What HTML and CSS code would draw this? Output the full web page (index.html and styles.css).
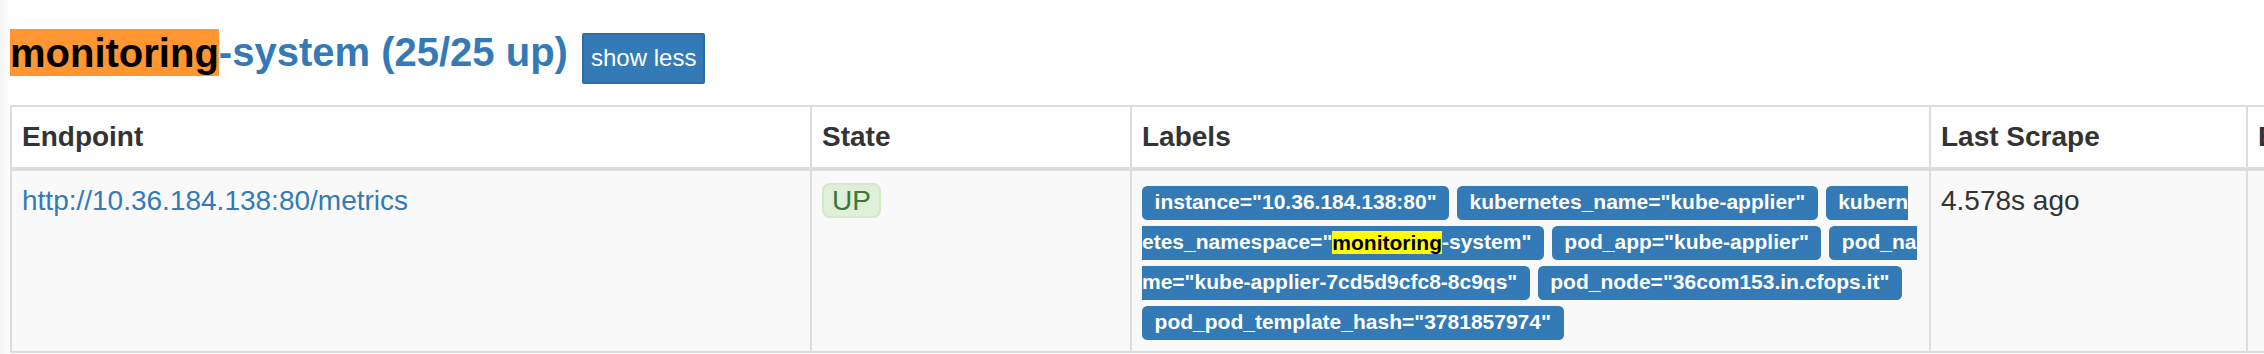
FILE: index.html
```html
<!DOCTYPE html>
<html lang="en">
<head>
    <meta charset="UTF-8">
    <meta name="viewport" content="width=device-width, initial-scale=1.0">
    <title>Targets</title>
    <link rel="stylesheet" href="styles.css">
</head>
<body>

    <div class="container">
        <h2 class="job-title">
            <a href="#job-monitoring-system"><mark class="find-active">monitoring</mark>-system (25/25 up)</a>
            <button class="toggle-btn">show less</button>
        </h2>

        <table class="targets">
            <colgroup>
                <col class="col-endpoint">
                <col class="col-state">
                <col class="col-labels">
                <col class="col-scrape">
                <col class="col-error">
            </colgroup>
            <thead>
                <tr>
                    <th>Endpoint</th>
                    <th>State</th>
                    <th>Labels</th>
                    <th>Last Scrape</th>
                    <th>Error</th>
                </tr>
            </thead>
            <tbody>
                <tr>
                    <td><a href="http://10.36.184.138:80/metrics">http://10.36.184.138:80/metrics</a></td>
                    <td><span class="state state-up">UP</span></td>
                    <td class="labels">
                        <span class="label">instance="10.36.184.138:80"</span>
                        <span class="label">kubernetes_name="kube-applier"</span>
                        <span class="label">kubernetes_namespace="<mark class="find">monitoring</mark>-system"</span>
                        <span class="label">pod_app="kube-applier"</span>
                        <span class="label">pod_name="kube-applier-7cd5d9cfc8-8c9qs"</span>
                        <span class="label">pod_node="36com153.in.cfops.it"</span>
                        <span class="label">pod_pod_template_hash="3781857974"</span>
                    </td>
                    <td>4.578s ago</td>
                    <td></td>
                </tr>
            </tbody>
        </table>
    </div>

</body>
</html>
```

FILE: styles.css
```css
html, body {
    margin: 0;
    padding: 0;
    overflow: hidden;
}
body {
    font-family: "Liberation Sans", Arial, sans-serif;
    font-size: 28px;
    line-height: 40px;
    color: #333;
    background: linear-gradient(to right, #f3f3f3, #fff 10px);
}
.container {
    padding: 30px 0 0 10px;
}
.job-title {
    margin: 0 0 21px;
    font-size: 40px;
    line-height: 44px;
    font-weight: bold;
}
.job-title a {
    color: #337ab7;
    text-decoration: none;
}
mark {
    color: #000;
}
.find-active {
    background-color: #ff9632;
    padding: 1.5px 0;
}
.find {
    background-color: #ffff00;
}
.toggle-btn {
    margin-left: 3px;
    padding: 5.5px 7px;
    font-family: inherit;
    font-size: 24px;
    line-height: 36px;
    font-weight: normal;
    color: #fff;
    background-color: #337ab7;
    border: 2px solid #2e6da4;
    border-radius: 2px;
}
.targets {
    border-collapse: collapse;
    table-layout: fixed;
    width: 2638px;
    background-color: #fff;
}
.col-endpoint { width: 800px; }
.col-state { width: 320px; }
.col-labels { width: 799px; }
.col-scrape { width: 317px; }
.col-error { width: 400px; }
.targets th, .targets td {
    padding: 10px;
    text-align: left;
    vertical-align: top;
    border: 2px solid #ddd;
}
.targets th {
    border-bottom-width: 4px;
    font-weight: bold;
}
.targets tbody tr {
    background-color: #f9f9f9;
}
.targets a {
    color: #337ab7;
    text-decoration: none;
}
.state {
    padding: 0 8px;
    border: 2px solid #d6e9c6;
    border-radius: 8px;
    background-color: #dff0d8;
    color: #3c763d;
}
.labels {
    word-break: break-all;
}
.label {
    padding: 0.2em 0.6em 0.3em;
    font-size: 21px;
    font-weight: bold;
    line-height: 1;
    color: #fff;
    background-color: #337ab7;
    border-radius: 0.25em;
}
```
